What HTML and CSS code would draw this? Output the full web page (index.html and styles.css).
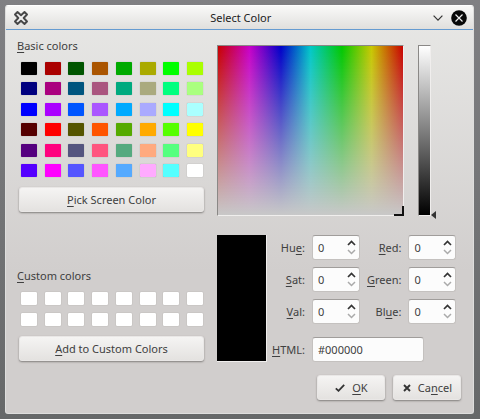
FILE: index.html
```html
<!DOCTYPE html>
<html lang="en">
<head>
<meta charset="utf-8">
<meta name="viewport" content="width=device-width, initial-scale=1">
<title>Select Color</title>
<link rel="stylesheet" href="styles.css">
</head>
<body>
<svg class="defs" aria-hidden="true">
  <symbol id="up" viewBox="0 0 9 6"><path d="M1 5 4.500 1.500 8 5" fill="none" stroke="#333" stroke-width="1.7"/></symbol>
  <symbol id="down" viewBox="0 0 9 6"><path d="M1 1 4.500 4.500 8 1" fill="none" stroke="#aaa" stroke-width="1.5"/></symbol>
</svg>
<main class="dialog">
  <header class="titlebar">
    <svg class="app-icon" viewBox="0 0 14 14" aria-hidden="true">
      <path d="M3.5 1 7 4.3 10.500 1 13 3.500 9.700 7 13 10.500 10.500 13 7 9.700 3.500 13 1 10.500 4.300 7 1 3.500Z" fill="#f0f0f0" stroke="#484848" stroke-width="1.9" stroke-linejoin="round"/>
    </svg>
    <h1 class="title">Select Color</h1>
    <div class="window-buttons">
      <button class="window-button" aria-label="Minimize"><svg class="minimize" viewBox="0 0 10 6"><path d="M.6.700 5 5.100 9.400.7" fill="none" stroke="#333" stroke-width="1.200"/></svg></button>
      <button class="window-button" aria-label="Close"><svg class="close" viewBox="0 0 16 16"><circle cx="8" cy="8" r="7.800" fill="#080808"/><path d="m4.500 4.500 7 7m0-7-7 7" stroke="#eee" stroke-width="1.200"/></svg></button>
    </div>
  </header>
  <div class="content">
    <section class="palettes">
      <h2 class="heading"><u>B</u>asic colors</h2>
      <div class="swatches basic" id="basic"></div>
      <button class="button wide"><span><u>P</u>ick Screen Color</span></button>
      <h2 class="heading custom-heading"><u>C</u>ustom colors</h2>
      <div class="swatches custom" id="custom"></div>
      <button class="button wide"><span><u>A</u>dd to Custom Colors</span></button>
    </section>
    <section class="picker">
      <div class="spectrum-row">
        <div class="spectrum"><span class="crosshair"></span></div>
        <div class="luminance"><span class="marker"></span></div>
      </div>
      <div class="values">
        <div class="preview"></div>
        <form class="fields">
          <label for="hue">Hu<u>e</u>:</label>
          <div class="spin"><input id="hue" type="number" value="0"><button type="button" class="step" aria-label="Increase hue"><svg><use href="#up"/></svg></button><button type="button" class="step lower" aria-label="Decrease hue"><svg><use href="#down"/></svg></button></div>
          <label for="red"><u>R</u>ed:</label>
          <div class="spin"><input id="red" type="number" value="0"><button type="button" class="step" aria-label="Increase red"><svg><use href="#up"/></svg></button><button type="button" class="step lower" aria-label="Decrease red"><svg><use href="#down"/></svg></button></div>
          <label for="sat"><u>S</u>at:</label>
          <div class="spin"><input id="sat" type="number" value="0"><button type="button" class="step" aria-label="Increase saturation"><svg><use href="#up"/></svg></button><button type="button" class="step lower" aria-label="Decrease saturation"><svg><use href="#down"/></svg></button></div>
          <label for="green"><u>G</u>reen:</label>
          <div class="spin"><input id="green" type="number" value="0"><button type="button" class="step" aria-label="Increase green"><svg><use href="#up"/></svg></button><button type="button" class="step lower" aria-label="Decrease green"><svg><use href="#down"/></svg></button></div>
          <label for="val"><u>V</u>al:</label>
          <div class="spin"><input id="val" type="number" value="0"><button type="button" class="step" aria-label="Increase value"><svg><use href="#up"/></svg></button><button type="button" class="step lower" aria-label="Decrease value"><svg><use href="#down"/></svg></button></div>
          <label for="blue">Bl<u>u</u>e:</label>
          <div class="spin"><input id="blue" type="number" value="0"><button type="button" class="step" aria-label="Increase blue"><svg><use href="#up"/></svg></button><button type="button" class="step lower" aria-label="Decrease blue"><svg><use href="#down"/></svg></button></div>
          <label for="html" class="last"><u>H</u>TML:</label>
          <input id="html" class="hex last" type="text" value="#000000">
        </form>
      </div>
    </section>
  </div>
  <footer class="actions">
    <button class="button"><svg class="check" viewBox="0 0 10 8"><path d="M.8 4.300 3.500 6.800 9.200.8" fill="none" stroke="#333" stroke-width="1.800"/></svg><span><u>O</u>K</span></button>
    <button class="button"><svg class="cross" viewBox="0 0 8 8"><path d="m1 1 6 6m0-6-6 6" stroke="#333" stroke-width="1.900"/></svg><span>Ca<u>n</u>cel</span></button>
  </footer>
</main>
<script src="swatches.js"></script>
</body>
</html>
```

FILE: styles.css
```css
* { box-sizing: border-box; }

body {
  margin: 0;
  min-height: 100vh;
  padding: 5px 6px 5px 5px;
  display: flex;
  background: linear-gradient(#808083, #666869);
  font: 11px/16px "Noto Sans", sans-serif;
  color: #404040;
}

button, input { font: inherit; color: inherit; }
button { padding: 0; border: 0; background: none; }
u { text-underline-offset: 2px; text-decoration-thickness: 1px; text-decoration-skip-ink: none; }
.defs { position: absolute; width: 0; height: 0; }

.dialog {
  flex: 1;
  display: flex;
  flex-direction: column;
  border: 1px solid #dededd;
  border-top-color: #fff;
  border-radius: 3px;
  background: linear-gradient(#e8e8e6, #d1cecd 65%);
}

.titlebar {
  display: grid;
  grid-template-columns: 1fr auto 1fr;
  align-items: center;
  height: 24px;
  padding: 0 6px 0 8px;
  border-bottom: 1px solid #659bd1;
  border-radius: 3px 3px 0 0;
  background: linear-gradient(#f9f9f8, #e0dfdd);
}
.app-icon { width: 14px; height: 14px; }
.title { margin: 0; font-size: 11px; font-weight: 400; color: #222; }
.window-buttons { display: flex; justify-content: flex-end; align-items: center; gap: 8px; }
.window-button { display: flex; }
.minimize { width: 10px; height: 6px; }
.close { width: 16px; height: 16px; }

.content { display: flex; padding: 8px 12px 0 11px; }
.palettes { flex: 0 0 188px; }
.heading { margin: 0; font-size: 11px; font-weight: 400; line-height: 16px; }
.custom-heading { margin-top: 56px; }

.swatches {
  display: grid;
  grid-template-columns: repeat(8, 16px);
  justify-content: space-between;
  align-content: space-between;
  margin: 8px 2px 10px 4px;
}
.basic { height: 115px; }
.custom { height: 34px; }
.swatch {
  height: 13px;
  border-radius: 1px;
  box-shadow: 0 0 1px #8e8b89;
}

.button {
  display: flex;
  align-items: center;
  justify-content: center;
  gap: 7px;
  min-width: 68px;
  height: 25px;
  border: 1px solid #e9e7e6;
  border-radius: 3px;
  background: linear-gradient(#f5f4f3, #e4e2e0);
  box-shadow: 0 1px 2px #817e7c;
}
.wide { width: calc(100% - 3px); margin-left: 2px; }

.picker { flex: 1; padding: 7px 0 0 12px; }
.spectrum-row { display: flex; gap: 14px; padding-right: 30px; }
.spectrum, .luminance {
  position: relative;
  height: 171px;
  border: 1px solid #f0eeed;
  border-top-color: #8a8886;
  border-left-color: #8a8886;
}
.spectrum {
  flex: 1;
  background:
    linear-gradient(#c8c8c800, #c8c8c8),
    linear-gradient(90deg, #c80000, #c800c8 17%, #0000c8 34%, #00c8c8 50%, #00c800 67%, #c8c800 83%, #c80000);
}
.crosshair {
  position: absolute;
  right: -1px;
  bottom: -1px;
  width: 10px;
  height: 10px;
  border: solid #111;
  border-width: 0 2px 2px 0;
}
.luminance { width: 13px; background: linear-gradient(#fff, #000); }
.marker {
  position: absolute;
  right: -6px;
  bottom: -4px;
  border: solid transparent;
  border-width: 4px 5px 4px 0;
  border-right-color: #333;
}

.values { display: flex; gap: 5px; margin-top: 19px; }
.preview { flex: 0 0 50px; background: #000; border: 1px solid #f0eeed; border-width: 0 1px 1px 0; }
.fields {
  flex: 1;
  display: grid;
  grid-template-columns: 1fr 48px 1fr 48px;
  align-items: center;
  gap: 7px;
  padding-right: 5px;
}
.fields label { justify-self: end; white-space: nowrap; }
.fields .last { margin-top: 6px; }
.spin { position: relative; }
.spin input, .hex {
  display: block;
  width: 100%;
  height: 25px;
  padding: 0 5px;
  border: 1px solid #c4c1bf;
  border-top-color: #a09d9b;
  border-radius: 3px;
  background: #fcfcfc;
}
.spin input { appearance: textfield; }
.spin input::-webkit-inner-spin-button { appearance: none; margin: 0; }
.fields .hex { grid-column: 2 / 5; width: 112px; }
.step { position: absolute; right: 4px; top: 5px; display: flex; }
.lower { top: 14px; }
.step svg { width: 9px; height: 6px; }

.actions {
  display: flex;
  justify-content: flex-end;
  gap: 8px;
  margin-top: auto;
  padding: 12px 12px 13px 0;
}
.check { width: 10px; height: 8px; }
.cross { width: 8px; height: 8px; }
```

FILE: swatches.js
```js
const basic = [
  "#000000", "#aa0000", "#005500", "#aa5500", "#00aa00", "#aaaa00", "#00ff00", "#aaff00",
  "#00007f", "#aa007f", "#00557f", "#aa557f", "#00aa7f", "#aaaa7f", "#00ff7f", "#aaff7f",
  "#0000ff", "#aa00ff", "#0055ff", "#aa55ff", "#00aaff", "#aaaaff", "#00ffff", "#aaffff",
  "#550000", "#ff0000", "#555500", "#ff5500", "#55aa00", "#ffaa00", "#55ff00", "#ffff00",
  "#55007f", "#ff007f", "#55557f", "#ff557f", "#55aa7f", "#ffaa7f", "#55ff7f", "#ffff7f",
  "#5500ff", "#ff00ff", "#5555ff", "#ff55ff", "#55aaff", "#ffaaff", "#55ffff", "#ffffff"
];

function fill(id, colors) {
  const grid = document.getElementById(id);
  for (const color of colors) {
    const swatch = document.createElement("button");
    swatch.className = "swatch";
    swatch.style.backgroundColor = color;
    swatch.setAttribute("aria-label", color);
    grid.append(swatch);
  }
}

fill("basic", basic);
fill("custom", Array(16).fill("#ffffff"));
```
